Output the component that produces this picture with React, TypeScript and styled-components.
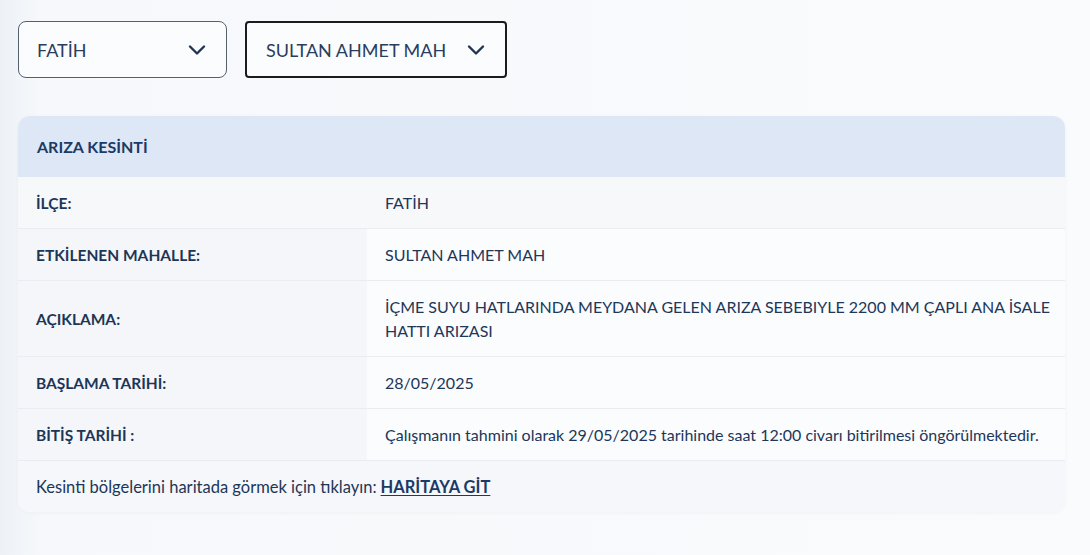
import React from "react";
import styled, { createGlobalStyle } from "styled-components";

const Global = createGlobalStyle`
  html, body { margin: 0; padding: 0; }
  body {
    font-family: Lato, "Noto Sans", sans-serif;
    background: linear-gradient(90deg, #edf1f6 0px, #f6f8fb 40px, #f9fbfd 100%);
    min-height: 555px;
  }
`;

const Page = styled.div`
  padding: 21px 25px 40px 18px;
  display: flex;
  flex-direction: column;
  gap: 38px;
`;

const Filters = styled.div`
  display: flex;
  gap: 18px;
`;

const Select = styled.div<{ $w: number; $active?: boolean }>`
  box-sizing: border-box;
  width: ${(p) => p.$w}px;
  height: 57px;
  display: flex;
  align-items: center;
  justify-content: space-between;
  padding: 0 20px 0 ${(p) => (p.$active ? 19 : 18)}px;
  border: ${(p) => (p.$active ? "2px solid #1c1c1e" : "1px solid #55606e")};
  border-radius: ${(p) => (p.$active ? 4 : 8)}px;
  background: #fbfcfe;
  color: #2a3d5c;
  font-size: 18px;
`;

const Card = styled.div`
  width: 1047px;
  border-radius: 12px;
  overflow: hidden;
  background: #fbfcfd;
  box-shadow: 0 1px 4px rgba(30, 50, 80, 0.04);
`;

const Header = styled.div`
  height: 61px;
  display: flex;
  align-items: center;
  padding: 0 19px;
  background: #dde7f6;
  color: #1b3a66;
  font-weight: 700;
  font-size: 16px;
`;

const Row = styled.div<{ $h: number; $shade?: boolean }>`
  box-sizing: border-box;
  display: grid;
  grid-template-columns: 349px 1fr;
  min-height: ${(p) => p.$h}px;
  border-bottom: 1px solid #e9edf1;
  background: ${(p) => (p.$shade ? "#f7f8fa" : "#fbfcfd")};
`;

const Label = styled.div<{ $shade?: boolean }>`
  display: flex;
  align-items: center;
  padding: 0 18px;
  background: ${(p) => (p.$shade ? "#f7f8fa" : "#f4f6f9")};
  color: #1d3657;
  font-weight: 700;
  font-size: 15.5px;
`;

const Value = styled.div`
  display: flex;
  align-items: center;
  padding: 0 4px 0 18px;
  color: #20375a;
  font-size: 16px;
  line-height: 24px;
`;

const Footer = styled.div`
  height: 51px;
  display: flex;
  align-items: center;
  padding: 0 18px;
  background: #f5f7fa;
  color: #1d3657;
  font-size: 16.5px;
`;

const MapLink = styled.a`
  margin-left: 4px;
  color: #1b3a66;
  font-weight: 700;
  text-decoration: underline;
  text-underline-offset: 2px;
`;

const Chevron = () => (
  <svg width="18" height="12" viewBox="0 0 18 12" fill="none">
    <path d="M2 2.5L9 9.5L16 2.5" stroke="#1e3553" strokeWidth="2.4" strokeLinecap="round" strokeLinejoin="round" />
  </svg>
);

const rows: { label: string; value: string; h: number; shade?: boolean }[] = [
  { label: "İLÇE:", value: "FATİH", h: 52, shade: true },
  { label: "ETKİLENEN MAHALLE:", value: "SULTAN AHMET MAH", h: 52 },
  {
    label: "AÇIKLAMA:",
    value: "İÇME SUYU HATLARINDA MEYDANA GELEN ARIZA SEBEBIYLE 2200 MM ÇAPLI ANA İSALE HATTI ARIZASI",
    h: 76,
  },
  { label: "BAŞLAMA TARİHİ:", value: "28/05/2025", h: 52 },
  {
    label: "BİTİŞ TARİHİ :",
    value: "Çalışmanın tahmini olarak 29/05/2025 tarihinde saat 12:00 civarı bitirilmesi öngörülmektedir.",
    h: 52,
  },
];

export default function App() {
  return (
    <>
      <Global />
      <Page>
        <Filters>
          <Select $w={209}>
            <span>FATİH</span>
            <Chevron />
          </Select>
          <Select $w={262} $active>
            <span>SULTAN AHMET MAH</span>
            <Chevron />
          </Select>
        </Filters>
        <Card>
          <Header>ARIZA KESİNTİ</Header>
          {rows.map((r) => (
            <Row key={r.label} $h={r.h} $shade={r.shade}>
              <Label $shade={r.shade}>{r.label}</Label>
              <Value>{r.value}</Value>
            </Row>
          ))}
          <Footer>
            Kesinti bölgelerini haritada görmek için tıklayın:
            <MapLink href="#">HARİTAYA GİT</MapLink>
          </Footer>
        </Card>
      </Page>
    </>
  );
}
